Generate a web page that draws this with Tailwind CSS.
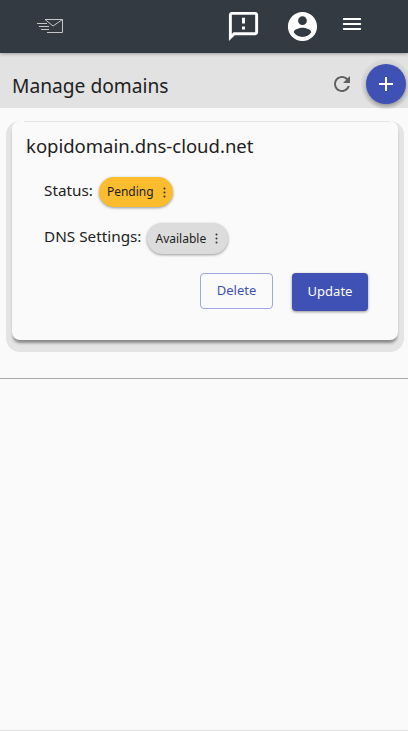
<!DOCTYPE html>
<html lang="en">
<head>
    <meta charset="UTF-8">
    <meta name="viewport" content="width=device-width, initial-scale=1.0">
    <title>Manage domains</title>
    <script src="https://cdn.jsdelivr.net/npm/@tailwindcss/browser@4"></script>
</head>
<body class="bg-[#fafafa] h-[731px] overflow-hidden flex flex-col font-['Noto_Sans',sans-serif] text-[#212121] border-b border-[#e0e0e0]">
    <header class="bg-[#343a42] h-[53px] shrink-0 flex items-center shadow-[0_1px_3px_rgba(0,0,0,0.3)] relative z-10">
        <svg class="ml-[36px] mt-[-2px]" width="28" height="18" viewBox="0 0 28 18" fill="none" stroke="#c4c6c8" stroke-width="1">
            <path d="M9 2.5H26.5V15.5H11M9 2.5L17 9L26.5 2.5M1 6.5H11M3 9.5H13M5 12.5H13" />
        </svg>
        <svg class="ml-[162px] mt-[-1px]" width="35" height="35" viewBox="0 0 24 24" fill="#fff">
            <path d="M20 2H4c-1.1 0-1.99.9-1.99 2L2 22l4-4h14c1.1 0 2-.9 2-2V4c0-1.1-.9-2-2-2zm0 14H5.17L4 17.17V4h16v12zM11 12h2v2h-2zm0-6h2v4h-2z" />
        </svg>
        <svg class="ml-[24px] mt-[-1px]" width="35" height="35" viewBox="0 0 24 24" fill="#fff">
            <path d="M12 2C6.48 2 2 6.48 2 12s4.48 10 10 10 10-4.48 10-10S17.52 2 12 2zm0 3c1.66 0 3 1.34 3 3s-1.34 3-3 3-3-1.34-3-3 1.34-3 3-3zm0 14.2c-2.5 0-4.71-1.28-6-3.22.03-1.99 4-3.08 6-3.08 1.99 0 5.97 1.09 6 3.08-1.29 1.94-3.5 3.22-6 3.22z" />
        </svg>
        <svg class="ml-[20px] mt-[-5px]" width="24" height="24" viewBox="0 0 24 24" fill="#fff">
            <path d="M3 18h18v-2H3v2zm0-5h18v-2H3v2zm0-7v2h18V6H3z" />
        </svg>
    </header>

    <div class="bg-[#e2e2e2] h-[55px] shrink-0 flex items-center pl-[12px] relative">
        <h1 class="text-[19.2px] leading-[28px] mt-[10px]">Manage domains</h1>
        <svg class="absolute left-[330px] top-[19px]" width="24" height="24" viewBox="0 0 24 24" fill="#616161">
            <path d="M17.65 6.35C16.2 4.9 14.21 4 12 4c-4.42 0-7.99 3.58-7.99 8s3.57 8 7.99 8c3.73 0 6.84-2.55 7.73-6h-2.08c-.82 2.33-3.04 4-5.65 4-3.31 0-6-2.69-6-6s2.69-6 6-6c1.66 0 3.14.69 4.22 1.78L13 11h7V4l-2.35 2.35z" />
        </svg>
        <button class="absolute left-[366px] top-[11px] w-[40px] h-[40px] rounded-full bg-[#3f51b5] flex items-center justify-center shadow-[0_2px_4px_rgba(0,0,0,0.35),0_0_0_5px_rgba(0,0,0,0.04)] z-10">
            <svg width="24" height="24" viewBox="0 0 24 24" fill="#fff">
                <path d="M19 13h-6v6h-2v-6H5v-2h6V5h2v6h6v2z" />
            </svg>
        </button>
    </div>

    <main class="pl-[12px] pr-[10px] pt-[13px]">
        <section class="bg-[#fafafa] h-[219px] rounded-[8px] shadow-[0_4px_3px_-1px_rgba(0,0,0,0.4),0_6px_0_6px_#e4e4e4] pl-[12px] pr-[8px]">
            <div class="border-t border-[#e6e6e6] pl-[2px] pt-[11px]">
                <h2 class="text-[18.5px] leading-[26px]">kopidomain.dns-cloud.net</h2>
                <div class="flex items-center ml-[18px] mt-[18px] h-[30px]">
                    <span class="text-[15.3px] mt-[-4px]">Status:</span>
                    <span class="ml-[6px] h-[30px] w-[74px] rounded-full bg-[#fbbc2d] shadow-[0_1px_3px_rgba(0,0,0,0.4)] flex items-center pl-[8px] text-[12px]">
                        Pending
                        <svg class="ml-[9px]" width="3" height="11" viewBox="0 0 3 11" fill="#333"><circle cx="1.5" cy="1.5" r="1" /><circle cx="1.5" cy="5.5" r="1" /><circle cx="1.5" cy="9.5" r="1" /></svg>
                    </span>
                </div>
                <div class="flex items-center ml-[18px] mt-[16px] h-[31px]">
                    <span class="text-[15.3px] mt-[-4px]">DNS Settings:</span>
                    <span class="ml-[6px] h-[31px] w-[81px] rounded-full bg-[#dcdcdc] shadow-[0_1px_3px_rgba(0,0,0,0.4)] flex items-center pl-[8px] text-[12px]">
                        Available
                        <svg class="ml-[9px]" width="3" height="11" viewBox="0 0 3 11" fill="#333"><circle cx="1.5" cy="1.5" r="1" /><circle cx="1.5" cy="5.5" r="1" /><circle cx="1.5" cy="9.5" r="1" /></svg>
                    </span>
                </div>
                <div class="flex justify-end gap-[19px] mt-[19px] mr-[22px]">
                    <button class="w-[73px] h-[36px] rounded-[4px] border border-[#9fa8da] text-[#3f51b5] text-[13px]">Delete</button>
                    <button class="w-[76px] h-[38px] rounded-[4px] bg-[#3f51b5] text-white text-[13px] shadow-[0_1px_3px_rgba(0,0,0,0.4)]">Update</button>
                </div>
            </div>
        </section>
    </main>

    <hr class="mt-[38px] border-t border-[#aaaaaa]">
</body>
</html>
